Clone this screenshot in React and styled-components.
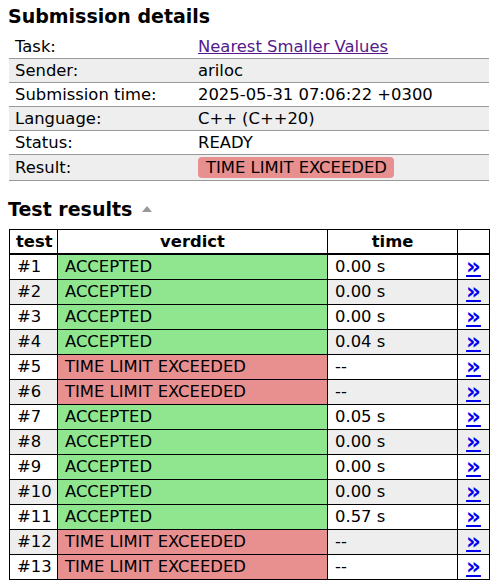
import React from "react";
import styled, { createGlobalStyle } from "styled-components";

const Global = createGlobalStyle`
  body {
    margin: 0;
    background: #fff;
    color: #000;
    font-family: "DejaVu Sans", Verdana, sans-serif;
    font-size: 16.4px;
  }
`;

const Page = styled.div`
  padding: 0 9px;
`;

const Heading = styled.h2`
  margin: ${(p) => p.$top}px 0 ${(p) => p.$bottom}px -1px;
  font-size: 19px;
  line-height: 24px;
  font-weight: bold;
  display: flex;
  align-items: center;
  gap: 9px;
`;

const Details = styled.table`
  width: 480px;
  border-collapse: collapse;
  table-layout: fixed;
`;

const DRow = styled.tr`
  background: ${(p) => (p.$alt ? "#eee" : "#fff")};
  border-bottom: 1px solid #999;
`;

const DCell = styled.td`
  padding: 2px 6px;
  line-height: 19px;
  white-space: nowrap;
`;

const TaskLink = styled.a`
  color: #551a8b;
  text-decoration: underline;
`;

const Badge = styled.span`
  display: inline-block;
  background: #e88f8f;
  border-radius: 4px;
  padding: 1px 7px 1px 8px;
  line-height: 19px;
`;

const Results = styled.table`
  width: 480px;
  border-collapse: collapse;
  table-layout: fixed;
  border: 1px solid #000;
`;

const Th = styled.th`
  border: 1px solid #000;
  border-bottom: 2px solid #000;
  padding: 2px 6px;
  line-height: 19px;
  font-weight: bold;
  text-align: center;
`;

const Td = styled.td`
  border: 1px solid #000;
  padding: 2px 7px;
  height: 20px;
  line-height: 20px;
  white-space: nowrap;
  text-align: ${(p) => (p.$center ? "center" : "left")};
  background: ${(p) =>
    p.$verdict === "ok" ? "#8fe68f" : p.$verdict === "tle" ? "#e88f8f" : p.$alt ? "#eee" : "#fff"};
`;

const More = styled.a`
  color: #0000ee;
  font-weight: bold;
  font-size: 23px;
  line-height: 18px;
  vertical-align: top;
  text-decoration: underline;
  text-decoration-thickness: 2px;
  text-underline-offset: 1px;
`;

const SortIcon = () => (
  <svg width="12" height="8" viewBox="0 0 12 8">
    <polygon points="6,1 11,7 1,7" fill="#999" />
  </svg>
);

const details = [
  ["Task:", <TaskLink href="#">Nearest Smaller Values</TaskLink>],
  ["Sender:", "ariloc"],
  ["Submission time:", "2025-05-31 07:06:22 +0300"],
  ["Language:", "C++ (C++20)"],
  ["Status:", "READY"],
  ["Result:", <Badge>TIME LIMIT EXCEEDED</Badge>],
];

const tests = [
  ["ok", "0.00 s"],
  ["ok", "0.00 s"],
  ["ok", "0.00 s"],
  ["ok", "0.04 s"],
  ["tle", "--"],
  ["tle", "--"],
  ["ok", "0.05 s"],
  ["ok", "0.00 s"],
  ["ok", "0.00 s"],
  ["ok", "0.00 s"],
  ["ok", "0.57 s"],
  ["tle", "--"],
  ["tle", "--"],
];

export default function App() {
  return (
    <Page>
      <Global />
      <Heading $top={4} $bottom={7}>Submission details</Heading>
      <Details>
        <colgroup>
          <col style={{ width: 183 }} />
          <col />
        </colgroup>
        <tbody>
          {details.map(([k, v], i) => (
            <DRow key={k} $alt={i % 2 === 1}>
              <DCell>{k}</DCell>
              <DCell>{v}</DCell>
            </DRow>
          ))}
        </tbody>
      </Details>
      <Heading $top={16} $bottom={8}>
        Test results <SortIcon />
      </Heading>
      <Results>
        <colgroup>
          <col style={{ width: 48 }} />
          <col style={{ width: 270 }} />
          <col style={{ width: 130 }} />
          <col style={{ width: 32 }} />
        </colgroup>
        <thead>
          <tr>
            <Th>test</Th>
            <Th>verdict</Th>
            <Th>time</Th>
            <Th />
          </tr>
        </thead>
        <tbody>
          {tests.map(([v, t], i) => (
            <tr key={i}>
              <Td $alt={i % 2 === 1}>#{i + 1}</Td>
              <Td $verdict={v}>{v === "ok" ? "ACCEPTED" : "TIME LIMIT EXCEEDED"}</Td>
              <Td $alt={i % 2 === 1}>{t}</Td>
              <Td $alt={i % 2 === 1} $center>
                <More href="#">»</More>
              </Td>
            </tr>
          ))}
        </tbody>
      </Results>
    </Page>
  );
}
